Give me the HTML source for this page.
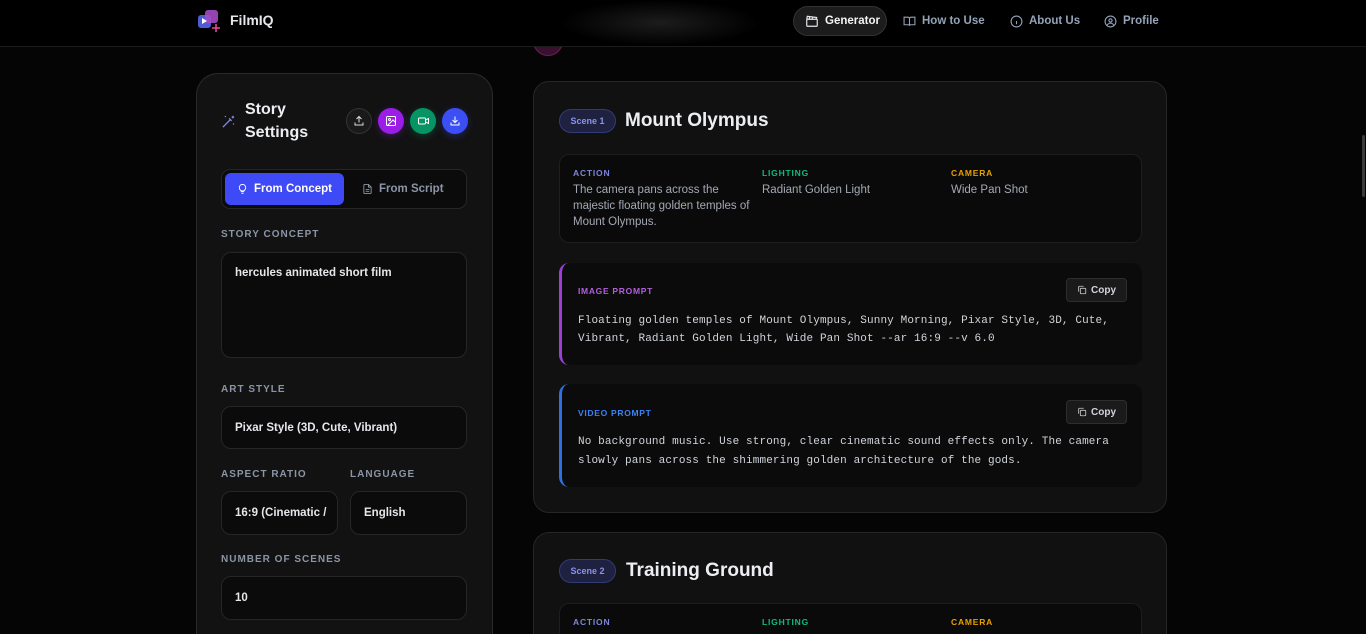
<!DOCTYPE html>
<html><head><meta charset="utf-8">
<style>
*{box-sizing:border-box;margin:0;padding:0}
html,body{width:1366px;height:634px;overflow:hidden}
body{background:#050505;font-family:"Liberation Sans",sans-serif;color:#e5e7eb;position:relative}
.hdr{position:absolute;left:0;top:0;width:1366px;height:47px;background:#000;border-bottom:1px solid #1c1c1c}
.glow{position:absolute;left:560px;top:0;width:200px;height:46px;background:radial-gradient(ellipse at center,#1c1c1c 0%,#000 70%)}
.logo{position:absolute;left:198px;top:10px}
.brand{position:absolute;left:230px;top:12px;font-size:14px;font-weight:bold;color:#e5e7eb}
.nav{position:absolute;top:6px;height:30px;display:flex;align-items:center;font-size:11.5px;font-weight:bold;color:#94a3b8;gap:6px}
.nav svg{stroke:#94a3b8}
.gen{left:793px;width:94px;background:#1c1c1c;border:1px solid #333;border-radius:16px;color:#f3f4f6;padding-left:11px}
.gen svg{stroke:#e5e7eb}
.panel{position:absolute;left:196px;top:73px;width:297px;height:561px;background:#121212;border:1px solid #2a2a2a;border-bottom:none;border-radius:22px 22px 0 0}
.lbl{position:absolute;left:24px;font-size:10px;font-weight:bold;letter-spacing:1px;color:#8b95a6}
.inp{position:absolute;background:#0b0b0b;border:1px solid #262626;border-radius:10px;font-size:11.5px;font-weight:bold;color:#e5e7eb;padding-left:13px;display:flex;align-items:center}
.cbtn{position:absolute;top:34px;width:26px;height:26px;border-radius:50%;display:flex;align-items:center;justify-content:center}
.card{position:absolute;left:533px;width:634px;background:#111;border:1px solid #262626;border-radius:16px}
.badge{position:absolute;left:25px;width:57px;height:24px;border-radius:12px;background:#1e2140;border:1px solid #333a78;color:#8b93e8;font-size:9px;font-weight:bold;display:flex;align-items:center;justify-content:center}
.ttl{position:absolute;left:91px;font-size:19px;font-weight:bold;color:#eceef2}
.meta{position:absolute;left:25px;width:583px;background:#0a0a0a;border:1px solid #1e1e1e;border-radius:10px}
.mh{position:absolute;top:13px;font-size:8.5px;font-weight:bold;letter-spacing:.8px}
.mv{position:absolute;top:27px;font-size:11.5px;line-height:16px;color:#a3a9b4}
.pr{position:absolute;left:25px;width:583px;background:#0b0b0b;border-radius:10px;border-left:3px solid}
.ph{position:absolute;left:16px;font-size:8.5px;font-weight:bold;letter-spacing:.7px}
.pt{position:absolute;left:16px;font-family:"Liberation Mono",monospace;font-size:11px;letter-spacing:.12px;line-height:18px;color:#d1d5db;white-space:pre}
.copy{position:absolute;right:15px;width:61px;height:24px;background:#1a1a1a;border:1px solid #2e2e2e;border-radius:4px;font-size:10px;font-weight:bold;color:#d1d5db;display:flex;align-items:center;justify-content:center;gap:4px}
</style></head><body>
<div class="hdr">
 <div class="glow"></div>
 <svg class="logo" width="24" height="22" viewBox="0 0 24 22"><rect x="0" y="5" width="13" height="13" rx="3" fill="#4f5bd5"/><rect x="7" y="0" width="13" height="13" rx="3" fill="#a34bc4" opacity=".9"/><path d="M4 8l5 3-5 3z" fill="#fff"/><path d="M18 14v8M14 18h8" stroke="#ec4899" stroke-width="1.5"/></svg>
 <div class="brand">FilmIQ</div>
 <div class="nav gen"><svg width="14" height="14" viewBox="0 0 24 24" fill="none" stroke-width="2"><rect x="3" y="9" width="18" height="12" rx="1"/><path d="M3 9l1-5 16 2-1 3M8 5l-1 4M13 6l-1 3"/></svg>Generator</div>
 <div class="nav" style="left:903px"><svg width="13" height="13" viewBox="0 0 24 24" fill="none" stroke-width="2"><path d="M2 4h7a3 3 0 0 1 3 3v13a2 2 0 0 0-2-2H2zM22 4h-7a3 3 0 0 0-3 3v13a2 2 0 0 1 2-2h8z"/></svg>How to Use</div>
 <div class="nav" style="left:1010px"><svg width="13" height="13" viewBox="0 0 24 24" fill="none" stroke-width="2"><circle cx="12" cy="12" r="10"/><path d="M12 11v6M12 7h.01"/></svg>About Us</div>
 <div class="nav" style="left:1104px"><svg width="13" height="13" viewBox="0 0 24 24" fill="none" stroke-width="2"><circle cx="12" cy="12" r="10"/><circle cx="12" cy="10" r="3"/><path d="M6 19c1.5-3 3.5-4 6-4s4.5 1 6 4"/></svg>Profile</div>
</div>
<div style="position:absolute;left:533px;top:47px;width:30px;height:9px;overflow:hidden"><div style="width:30px;height:30px;border-radius:50%;background:#3a1030;border:1px solid #6b1f55;margin-top:-21px"></div></div>

<div class="panel">
 <svg style="position:absolute;left:24px;top:40px" width="15" height="15" viewBox="0 0 24 24" fill="none" stroke="#7c86e8" stroke-width="2"><path d="M3 21L15 9M13 7l4 4M19 3v4M17 5h4M7 3v2M6 4h2M20 15v2M19 16h2"/></svg>
 <div style="position:absolute;left:48px;top:24px;font-size:16px;font-weight:bold;line-height:23px;color:#eceef2">Story<br>Settings</div>
 <div class="cbtn" style="left:149px;background:#1a1a1a;border:1px solid #333"><svg width="12" height="12" viewBox="0 0 24 24" fill="none" stroke="#ddd" stroke-width="2"><path d="M12 15V3M7 8l5-5 5 5M4 15v5h16v-5"/></svg></div>
 <div class="cbtn" style="left:181px;background:#9b1de8;box-shadow:0 2px 8px #9b1de855"><svg width="12" height="12" viewBox="0 0 24 24" fill="none" stroke="#fff" stroke-width="2"><rect x="3" y="3" width="18" height="18" rx="2"/><circle cx="9" cy="9" r="2"/><path d="M21 15l-5-5L5 21"/></svg></div>
 <div class="cbtn" style="left:213px;background:#079465;box-shadow:0 2px 8px #07946555"><svg width="13" height="12" viewBox="0 0 24 24" fill="none" stroke="#fff" stroke-width="2"><rect x="2" y="6" width="14" height="12" rx="2"/><path d="M16 10l6-3v10l-6-3"/></svg></div>
 <div class="cbtn" style="left:245px;background:#3b4ff5;box-shadow:0 2px 8px #3b4ff555"><svg width="12" height="12" viewBox="0 0 24 24" fill="none" stroke="#fff" stroke-width="2"><path d="M12 3v12M7 10l5 5 5-5M4 15v5h16v-5"/></svg></div>
 <div style="position:absolute;left:24px;top:95px;width:246px;height:40px;background:#0b0b0b;border:1px solid #262626;border-radius:9px">
  <div style="position:absolute;left:3px;top:3px;width:119px;height:32px;background:#3d4af5;border-radius:6px;font-size:11.5px;font-weight:bold;color:#fff;display:flex;align-items:center;justify-content:center;gap:6px"><svg width="11" height="12" viewBox="0 0 24 24" fill="none" stroke="#fff" stroke-width="2"><path d="M9 18h6M10 22h4M12 2a7 7 0 0 0-4 12.7V16h8v-1.3A7 7 0 0 0 12 2z"/></svg>From Concept</div>
  <div style="position:absolute;left:140px;top:13px;font-size:11.5px;font-weight:bold;color:#8b95a6;display:flex;gap:6px;align-items:center"><svg width="11" height="12" viewBox="0 0 24 24" fill="none" stroke="#8b95a6" stroke-width="2"><path d="M14 2H6a2 2 0 0 0-2 2v16a2 2 0 0 0 2 2h12a2 2 0 0 0 2-2V8zM14 2v6h6M8 13h8M8 17h8"/></svg>From Script</div>
 </div>
 <div class="lbl" style="top:155px">STORY CONCEPT</div>
 <div class="inp" style="left:24px;top:178px;width:246px;height:106px;align-items:flex-start;padding-top:14px">hercules animated short film</div>
 <div class="lbl" style="top:310px">ART STYLE</div>
 <div class="inp" style="left:24px;top:332px;width:246px;height:43px">Pixar Style (3D, Cute, Vibrant)</div>
 <div class="lbl" style="top:395px">ASPECT RATIO</div>
 <div class="lbl" style="top:395px;left:153px">LANGUAGE</div>
 <div class="inp" style="left:24px;top:417px;width:117px;height:44px;white-space:nowrap;overflow:hidden">16:9 (Cinematic /</div>
 <div class="inp" style="left:153px;top:417px;width:117px;height:44px">English</div>
 <div class="lbl" style="top:480px">NUMBER OF SCENES</div>
 <div class="inp" style="left:24px;top:502px;width:246px;height:44px">10</div>
</div>

<div class="card" style="top:81px;height:432px">
 <div class="badge" style="top:27px">Scene 1</div>
 <div class="ttl" style="top:28px">Mount Olympus</div>
 <div class="meta" style="top:72px;height:89px">
  <div class="mh" style="left:13px;color:#7d86d9">ACTION</div>
  <div class="mh" style="left:202px;color:#10b981">LIGHTING</div>
  <div class="mh" style="left:391px;color:#e5a100">CAMERA</div>
  <div class="mv" style="left:13px;width:185px">The camera pans across the majestic floating golden temples of Mount Olympus.</div>
  <div class="mv" style="left:202px">Radiant Golden Light</div>
  <div class="mv" style="left:391px">Wide Pan Shot</div>
 </div>
 <div class="pr" style="top:181px;height:102px;border-color:#9b3fd8">
  <div class="ph" style="top:23px;color:#b35ee0">IMAGE PROMPT</div>
  <div class="copy" style="top:15px"><svg width="10" height="10" viewBox="0 0 24 24" fill="none" stroke="#ccc" stroke-width="2"><rect x="8" y="8" width="13" height="13" rx="2"/><path d="M4 16V5a2 2 0 0 1 2-2h10"/></svg>Copy</div>
  <div class="pt" style="top:49px">Floating golden temples of Mount Olympus, Sunny Morning, Pixar Style, 3D, Cute,
Vibrant, Radiant Golden Light, Wide Pan Shot --ar 16:9 --v 6.0</div>
 </div>
 <div class="pr" style="top:302px;height:103px;border-color:#2f6fe0">
  <div class="ph" style="top:24px;color:#3b82f6">VIDEO PROMPT</div>
  <div class="copy" style="top:16px"><svg width="10" height="10" viewBox="0 0 24 24" fill="none" stroke="#ccc" stroke-width="2"><rect x="8" y="8" width="13" height="13" rx="2"/><path d="M4 16V5a2 2 0 0 1 2-2h10"/></svg>Copy</div>
  <div class="pt" style="top:49px;line-height:19px">No background music. Use strong, clear cinematic sound effects only. The camera
slowly pans across the shimmering golden architecture of the gods.</div>
 </div>
</div>

<div class="card" style="top:532px;height:102px;border-bottom:none;border-radius:16px 16px 0 0">
 <div class="badge" style="top:26px">Scene 2</div>
 <div class="ttl" style="top:27px;left:92px">Training Ground</div>
 <div class="meta" style="top:70px;height:31px;border-bottom:none;border-radius:10px 10px 0 0">
  <div class="mh" style="left:13px;color:#7d86d9">ACTION</div>
  <div class="mh" style="left:202px;color:#10b981">LIGHTING</div>
  <div class="mh" style="left:391px;color:#e5a100">CAMERA</div>
 </div>
</div>
<div style="position:absolute;left:1362px;top:135px;width:3px;height:62px;background:#3a3a3a;border-radius:2px"></div>
</body></html>
